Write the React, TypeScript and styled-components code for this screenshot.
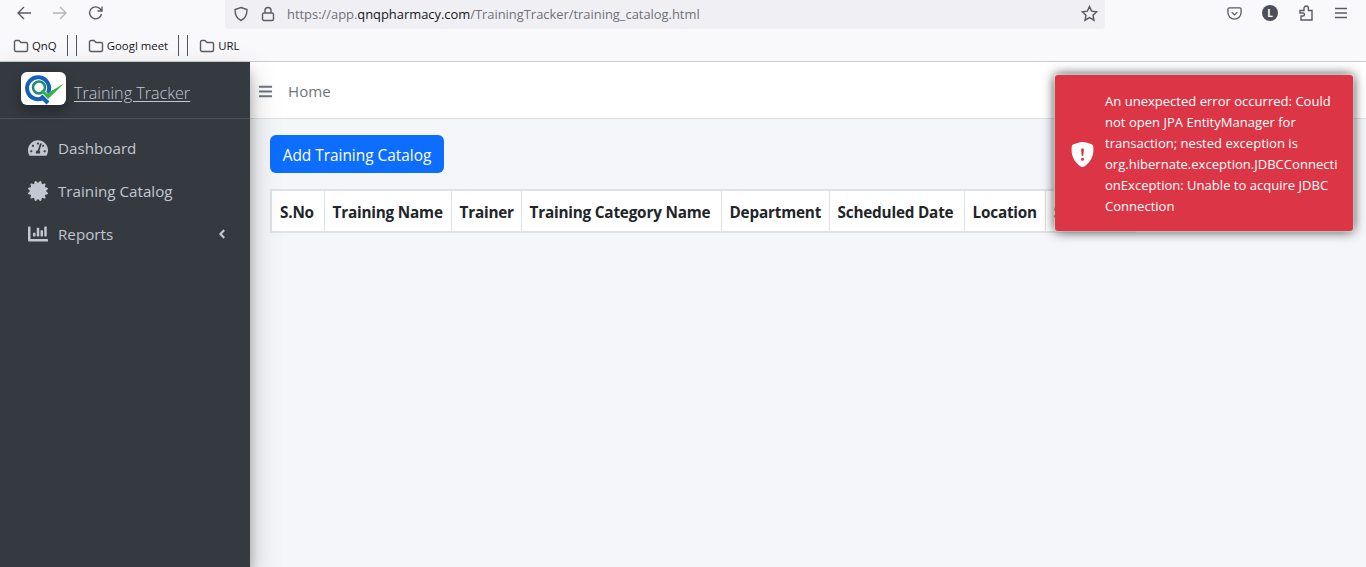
import React from "react";
import styled, { createGlobalStyle } from "styled-components";
import { FaTachometerAlt, FaCertificate, FaChartBar, FaAngleLeft, FaBars } from "react-icons/fa";
import { BsShieldFillExclamation } from "react-icons/bs";

const Global = createGlobalStyle`
  html, body { margin: 0; padding: 0; height: 100%; overflow: hidden; }
  body { font-family: "Open Sans", "Noto Sans", "Liberation Sans", sans-serif; background: #f4f6f9; }
  #root { height: 100%; }
`;

const Page = styled.div`
  width: 1366px; height: 567px; display: flex; flex-direction: column; position: relative; overflow: hidden;
`;
const Chrome = styled.header`
  height: 62px; box-sizing: border-box; background: #f9f9fb; border-bottom: 1px solid #ccc; flex: none;
  display: flex; flex-direction: column;
`;
const NavBar = styled.div`
  height: 30px; display: flex; align-items: flex-start; position: relative;
`;
const NavIcons = styled.div`
  width: 225px; height: 26px; display: flex; align-items: center; padding-left: 16px; gap: 20px; box-sizing: border-box; flex: none;
`;
const UrlBar = styled.div`
  width: 880px; height: 29px; background: #f0f0f4; border-radius: 0 0 4px 4px; display: flex; align-items: center;
  padding: 0 7px 2px 8px; box-sizing: border-box; flex: none;
`;
const UrlText = styled.div`
  margin-left: 12px; font-size: 12.9px; color: #6f6f78; flex: 1; white-space: nowrap;
  b { font-weight: 400; color: #15141a; }
`;
const Tools = styled.div`
  flex: 1; display: flex; align-items: center; height: 26px; padding-left: 122px; gap: 20px;
`;
const BookBar = styled.div`
  height: 31px; display: flex; align-items: center; padding-left: 13px; font-size: 11.4px; color: #15141a;
`;
const Book = styled.span`
  display: flex; align-items: center; gap: 3px;
`;
const Sep = styled.i`
  width: 1px; height: 21px; background: #55555c; margin-left: ${p => p.$m}px; flex: none;
`;
const Body = styled.div`flex: 1; display: flex; min-height: 0;`;
const Side = styled.aside`
  width: 250px; flex: none; background: #343a40; box-shadow: 0 14px 28px rgba(0,0,0,.25), 0 10px 10px rgba(0,0,0,.22);
  position: relative; z-index: 2; color: #c2c7d0;
`;
const Brand = styled.div`
  height: 57px; box-sizing: border-box; border-bottom: 1px solid #4b545c; display: flex; align-items: flex-start; padding: 10px 0 0 21px; gap: 8px;
`;
const LogoBox = styled.div`
  width: 45px; height: 33px; background: #fff; border-radius: 6px; box-shadow: 0 6px 12px rgba(0,0,0,.3); flex: none; display: flex; overflow: hidden;
`;
const BrandName = styled.a`
  font-size: 16.15px; line-height: 22px; margin-top: 10px; color: #c2c7d0; text-decoration: underline; text-underline-offset: 2px; font-weight: 300; white-space: nowrap;
`;
const Menu = styled.nav`display: flex; flex-direction: column; padding-top: 7px;`;
const MenuItem = styled.div`
  height: 43px; display: flex; align-items: center; padding: 0 21px 0 28px; font-size: 15.2px; gap: 10px; color: #c2c7d0;
  svg { flex: none; }
  span { flex: 1; }
`;
const Main = styled.main`flex: 1; display: flex; flex-direction: column; min-width: 0;`;
const TopBar = styled.div`
  height: 57px; background: #fff; border-bottom: 1px solid #dee2e6; box-sizing: border-box; display: flex; align-items: center; padding: 2px 0 0 8px; color: #6c757d; font-size: 15.1px; gap: 15px; flex: none;
`;
const Content = styled.div`
  padding: 16px 0 0 20px; display: flex; flex-direction: column; align-items: flex-start; gap: 16px;
`;
const AddButton = styled.button`
  height: 38px; width: 174px; background: #0d6efd; color: #fff; border: 0; border-radius: 6px; font: inherit; font-size: 15.4px; padding: 2px 0 0;
`;
const Table = styled.table`
  border-collapse: collapse; background: #fff; border: 2px solid #dee2e6; flex: none; table-layout: fixed;
`;
const HeadCell = styled.th`
  width: ${p => p.$w}px; height: 42px; box-sizing: border-box; padding: 2px 0 0 8px; border: 1px solid #dee2e6; font-size: 15.3px; font-weight: 700; color: #212529; white-space: nowrap; text-align: left; letter-spacing: -.2px;
`;
const Toast = styled.div`
  position: absolute; left: 1055px; top: 75px; width: 298px; height: 156px; background: #dc3545; border-radius: 3px;
  box-shadow: 0 0 3px #fff, 0 0 12px rgba(0,0,0,.85); color: #fff; display: flex; align-items: center; box-sizing: border-box; padding: 2px 0 0 15px; z-index: 5;
`;
const ToastText = styled.div`
  font-size: 13.05px; line-height: 21px; margin-left: 10px; width: 234px;
`;
const ToastLine = styled.div`white-space: nowrap;`;

const Logo = () => (
  <svg width="45" height="33" viewBox="0 0 45 33">
    <path d="M23 25.500 A11 11 0 1 1 27 21" fill="none" stroke="#1560bd" strokeWidth="4" />
    <path d="M20 24 L27 31" stroke="#1560bd" strokeWidth="4" />
    <circle cx="18" cy="15.500" r="6" fill="none" stroke="#1f8a70" strokeWidth="2.500" />
    <path d="M19.500 19 L22 17.500 L26 21.500 L43 11.500 L27 27 Z" fill="#37b24d" />
  </svg>
);

const Stroke = styled.svg`fill: none; stroke: ${p => p.$c || "#5b5b66"}; stroke-width: 1.4; flex: none;`;

const Folder = () => (
  <Stroke width="16" height="16" viewBox="0 0 16 16">
    <path d="M1.500 4 a1.500 1.500 0 0 1 1.500 -1.500 h3 l2 2 h5 a1.500 1.500 0 0 1 1.500 1.500 v6 a1.500 1.500 0 0 1 -1.500 1.500 h-10 a1.500 1.500 0 0 1 -1.500 -1.500 z" />
  </Stroke>
);

const columns: [string, number][] = [
  ["S.No", 53], ["Training Name", 127], ["Trainer", 70], ["Training Category Name", 200],
  ["Department", 108], ["Scheduled Date", 135], ["Location", 81], ["Status", 90],
];

export default function App() {
  return (
    <Page>
      <Global />
      <Chrome>
        <NavBar>
          <NavIcons>
            <Stroke width="16" height="16" viewBox="0 0 16 16"><path d="M15 8H2M8 2L2 8l6 6" /></Stroke>
            <Stroke width="16" height="16" viewBox="0 0 16 16" $c="#b4b4b9"><path d="M1 8h13M8 2l6 6-6 6" /></Stroke>
            <Stroke width="16" height="16" viewBox="0 0 16 16"><path d="M13.500 9a6 6 0 1 1-1.500-5.200L14 6M14 1.500V6H9.500" /></Stroke>
          </NavIcons>
          <UrlBar>
            <Stroke width="16" height="16" viewBox="0 0 16 16"><path d="M8 1.500L14 3.500c0 5-1.500 9-6 11-4.500-2-6-6-6-11z" /></Stroke>
            <Stroke width="14" height="16" viewBox="0 0 14 16" style={{ marginLeft: 12 }}><rect x="1.500" y="7" width="11" height="7.500" rx="1.500" /><path d="M4 7V4.500a3 3 0 0 1 6 0V7" /></Stroke>
            <UrlText>https://app.<b>qnqpharmacy.com</b>/TrainingTracker/training_catalog.html</UrlText>
            <Stroke width="17" height="17" viewBox="0 0 16 16"><path d="M8 1.500l2 4.300 4.700.6-3.400 3.200.9 4.700L8 11.900l-4.200 2.400.9-4.700-3.400-3.200 4.700-.6z" /></Stroke>
          </UrlBar>
          <Tools>
            <Stroke width="15" height="15" viewBox="0 0 16 16"><path d="M2.500 2h11A1.500 1.500 0 0 1 15 3.500V7a7 7 0 0 1-14 0V3.500A1.500 1.500 0 0 1 2.500 2zM5 6.500l3 3 3-3" /></Stroke>
            <svg width="16" height="16" viewBox="0 0 16 16" style={{ flex: "none" }}><circle cx="8" cy="8" r="8" fill="#4f4f59" /><text x="8" y="11.500" textAnchor="middle" fontSize="10" fontWeight="700" fill="#fff" fontFamily="Open Sans">L</text></svg>
            <Stroke width="16" height="16" viewBox="0 0 16 16"><path d="M6 5.500V3.200a2.200 2.200 0 0 1 4.400 0V5.500H14V15H3V11H5a1.500 1.500 0 0 0 0-3H2V5.500Z" /></Stroke>
            <Stroke width="14" height="14" viewBox="0 0 14 14"><path d="M1 2.500h12M1 7h12M1 11.500h12" /></Stroke>
          </Tools>
        </NavBar>
        <BookBar>
          <Book><Folder />QnQ</Book>
          <Sep $m={10} /><Sep $m={8} />
          <Book style={{ marginLeft: 11 }}><Folder />Googl meet</Book>
          <Sep $m={10} /><Sep $m={8} />
          <Book style={{ marginLeft: 11 }}><Folder />URL</Book>
        </BookBar>
      </Chrome>
      <Body>
        <Side>
          <Brand>
            <LogoBox><Logo /></LogoBox>
            <BrandName>Training Tracker</BrandName>
          </Brand>
          <Menu>
            <MenuItem><FaTachometerAlt size={20} color="#c2c7d0" /><span>Dashboard</span></MenuItem>
            <MenuItem><FaCertificate size={20} color="#c2c7d0" /><span>Training Catalog</span></MenuItem>
            <MenuItem><FaChartBar size={20} color="#c2c7d0" /><span>Reports</span><FaAngleLeft size={14} /></MenuItem>
          </Menu>
        </Side>
        <Main>
          <TopBar><FaBars size={15} /><span>Home</span></TopBar>
          <Content>
            <AddButton>Add Training Catalog</AddButton>
            <Table>
              <thead>
                <tr>
                  {columns.map(([name, w]) => <HeadCell key={name} $w={w}>{name}</HeadCell>)}
                </tr>
              </thead>
            </Table>
          </Content>
        </Main>
      </Body>
      <Toast>
        <BsShieldFillExclamation size={25} style={{ flex: "none" }} />
        <ToastText>
          <ToastLine>An unexpected error occurred: Could</ToastLine>
          <ToastLine>not open JPA EntityManager for</ToastLine>
          <ToastLine>transaction; nested exception is</ToastLine>
          <ToastLine>org.hibernate.exception.JDBCConnecti</ToastLine>
          <ToastLine>onException: Unable to acquire JDBC</ToastLine>
          <ToastLine>Connection</ToastLine>
        </ToastText>
      </Toast>
    </Page>
  );
}
